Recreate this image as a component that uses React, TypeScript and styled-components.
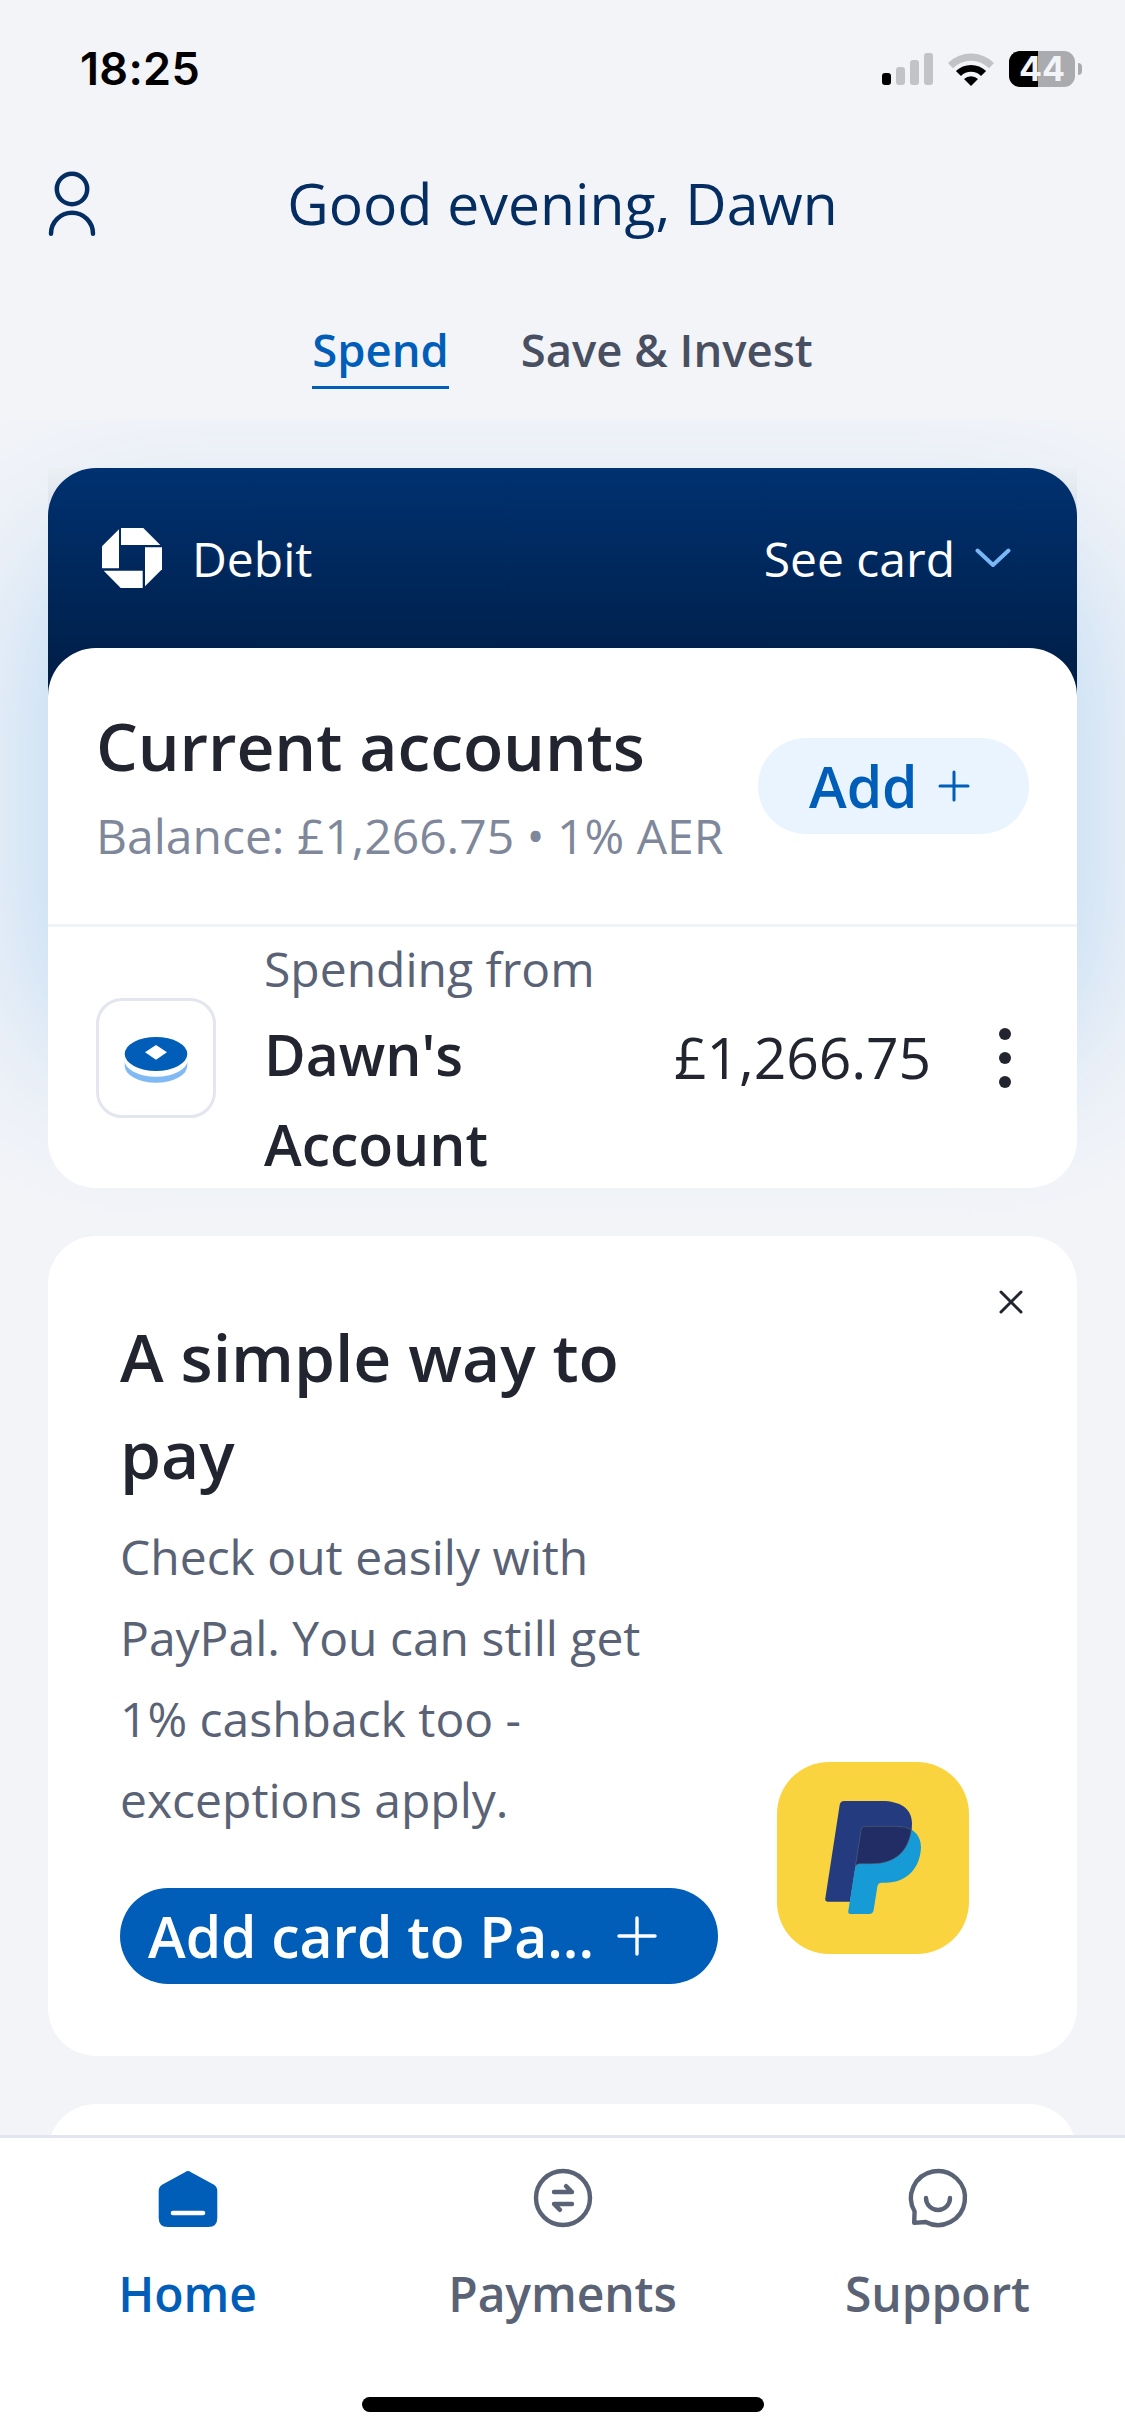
import React from "react";
import styled, { createGlobalStyle } from "styled-components";

const color = {
  page: "#f3f4f8",
  ink: "#22252f",
  slate: "#5a6275",
  mist: "#7f879a",
  blue: "#005eb8",
  navy: "#042d62",
  line: "#e3e6ee",
};

const GlobalStyle = createGlobalStyle`
  *, *::before { box-sizing: border-box; }
  body { margin: 0; background: ${color.page}; }
`;

const Screen = styled.div`
  width: 1125px;
  height: 2436px;
  display: flex;
  flex-direction: column;
  overflow: hidden;
  background: ${color.page};
  font-family: "Open Sans", "Noto Sans", sans-serif;
  color: ${color.ink};
`;

const Top = styled.header`
  height: 420px;
  flex: none;
  position: relative;
  z-index: 1;
  background: ${color.page};
`;

const StatusBar = styled.div`
  height: 138px;
  display: flex;
  align-items: center;
  justify-content: space-between;
  padding: 0 43px 0 80px;
`;

const Time = styled.span`
  font-family: Inter, "Open Sans", sans-serif;
  font-size: 45px;
  font-weight: 600;
  line-height: 54px;
  letter-spacing: 0.3px;
  color: #000;
`;

const StatusIcons = styled.div`
  display: flex;
  align-items: center;
  gap: 15px;
`;

const Signal = styled.div`
  display: flex;
  align-items: flex-end;
  gap: 5px;
  height: 32px;
`;

const Bar = styled.i<{ $h: number; $on?: boolean }>`
  width: 9px;
  height: ${(p) => p.$h}px;
  border-radius: 3px;
  background: ${(p) => (p.$on ? "#000" : "#c2c3c6")};
`;

const Battery = styled.div`
  display: flex;
  align-items: center;
  gap: 3px;
`;

const BatteryBody = styled.div`
  width: 66px;
  height: 36px;
  border-radius: 11px;
  background: linear-gradient(90deg, #000 29px, #aaabae 29px);
  color: ${color.page};
  font-family: Inter, "Open Sans", sans-serif;
  font-size: 34px;
  font-weight: 700;
  line-height: 36px;
  text-align: center;
`;

const BatteryCap = styled.i`
  width: 4px;
  height: 12px;
  border-radius: 0 4px 4px 0;
  background: #aaabae;
`;

const GreetingRow = styled.div`
  height: 130px;
  display: grid;
  grid-template-columns: 48px 1fr 48px;
  align-items: center;
  padding: 0 48px;
`;

const Greeting = styled.h1`
  margin: 0;
  text-align: center;
  font-size: 57px;
  font-weight: 400;
  line-height: 78px;
  letter-spacing: 0.08px;
  color: ${color.navy};
`;

const Tabs = styled.nav`
  display: flex;
  justify-content: center;
  gap: 72px;
  padding-top: 51px;
`;

const Tab = styled.a<{ $active?: boolean }>`
  font-size: 45.4px;
  font-weight: 600;
  line-height: 61px;
  padding-bottom: 6px;
  color: ${(p) => (p.$active ? color.blue : "#484f60")};
  border-bottom: 3px solid ${(p) => (p.$active ? color.blue : "transparent")};
`;

const Feed = styled.main`
  flex: 1;
  min-height: 0;
  display: flex;
  flex-direction: column;
  gap: 48px;
  padding: 48px 48px 0;
`;

const Hero = styled.section`
  flex: none;
  position: relative;
  background: linear-gradient(rgba(60, 60, 60, 0.01), rgba(60, 60, 60, 0.08) 40px, transparent 90px);

  &::before {
    content: "";
    position: absolute;
    inset: 84px 0 140px;
    box-shadow: 0 0 160px #b1d4f2;
  }
`;

const DebitHeader = styled.div`
  position: relative;
  height: 228px;
  margin-bottom: -48px;
  padding: 0 66px 48px 54px;
  border-radius: 48px 48px 0 0;
  background: linear-gradient(#003170, #001d44);
  color: #fff;
  display: flex;
  align-items: center;
  justify-content: space-between;
  font-size: 48px;
  line-height: 66px;
`;

const Inline = styled.div<{ $gap: number }>`
  display: flex;
  align-items: center;
  gap: ${(p) => p.$gap}px;
`;

const Label = styled.span`
  padding-top: 2px;
`;

const Accounts = styled.div`
  position: relative;
  background: #fff;
  border-radius: 48px;
`;

const AccountsHead = styled.div`
  height: 279px;
  padding: 48px;
  border-bottom: 3px solid #f2f3f8;
  display: flex;
  align-items: center;
  justify-content: space-between;
`;

const Title = styled.h2`
  margin: 0;
  font-size: 66px;
  font-weight: 600;
  line-height: 97px;
  letter-spacing: -0.08px;
  white-space: nowrap;
`;

const Caption = styled.p<{ $muted?: boolean }>`
  margin: 0;
  font-size: 48px;
  line-height: 81px;
  white-space: nowrap;
  padding-top: ${(p) => (p.$muted ? 1 : 0)}px;
  color: ${(p) => (p.$muted ? color.mist : color.slate)};
`;

const Button = styled.button<{ $primary?: boolean }>`
  height: 96px;
  width: ${(p) => (p.$primary ? 598 : 271)}px;
  padding: 0 ${(p) => (p.$primary ? "61px 0 28px" : "59px 0 51px")};
  border: 0;
  border-radius: 48px;
  display: flex;
  align-items: center;
  justify-content: space-between;
  font: 600 57px/78px "Open Sans", "Noto Sans", sans-serif;
  letter-spacing: -0.05px;
  white-space: nowrap;
  background: ${(p) => (p.$primary ? color.blue : "#e9f4ff")};
  color: ${(p) => (p.$primary ? "#fff" : color.blue)};
`;

const AccountRow = styled.div`
  height: 261px;
  padding: 0 66px 0 48px;
  display: flex;
  align-items: center;
`;

const AccountIcon = styled.div`
  width: 120px;
  height: 120px;
  flex: none;
  border: 3px solid ${color.line};
  border-radius: 26px;
  padding-top: 5px;
  display: flex;
  align-items: center;
  justify-content: center;
`;

const AccountText = styled.div`
  width: 340px;
  margin-left: 48px;
  padding-top: 2px;
`;

const AccountName = styled.div`
  font-size: 57px;
  font-weight: 600;
  line-height: 90px;
`;

const Amount = styled.div`
  margin-left: auto;
  font-size: 57px;
  line-height: 78px;
  letter-spacing: -0.1px;
  padding-bottom: 2px;
`;

const Kebab = styled.div`
  display: flex;
  flex-direction: column;
  gap: 12px;
  margin-left: 68px;
`;

const Dot = styled.i`
  width: 12px;
  height: 12px;
  border-radius: 50%;
  background: ${color.ink};
`;

const Card = styled.section`
  flex: none;
  position: relative;
  min-height: 200px;
  background: #fff;
  border-radius: 48px;
`;

const Promo = styled(Card)`
  display: grid;
  grid-template-columns: 598px 1fr;
  column-gap: 22px;
  padding: 72px;
`;

const PromoBody = styled.div`
  padding: 14px 0 48px;
`;

const PromoArt = styled.div`
  display: flex;
  align-items: flex-end;
  justify-content: center;
  padding-bottom: 30px;
`;

const PayPalTile = styled.div`
  width: 192px;
  height: 192px;
  border-radius: 52px;
  overflow: hidden;
  background: #fad43e;
`;

const Close = styled.span`
  position: absolute;
  top: 54px;
  right: 54px;
  display: flex;
`;

const BottomNav = styled.nav`
  flex: none;
  height: 301px;
  position: relative;
  background: #fff;
  border-top: 3px solid ${color.line};
  display: flex;
  flex-direction: column;
  align-items: center;
  justify-content: space-between;
  padding: 24px 0;
`;

const NavItems = styled.div`
  width: 100%;
  display: grid;
  grid-template-columns: repeat(3, 1fr);
`;

const NavItem = styled.a<{ $active?: boolean }>`
  display: flex;
  flex-direction: column;
  align-items: center;
  gap: 24px;
  font-size: 48px;
  font-weight: 600;
  line-height: 72px;
  letter-spacing: -0.1px;
  color: ${(p) => (p.$active ? color.blue : color.slate)};
`;

const HomeIndicator = styled.div`
  width: 402px;
  height: 15px;
  border-radius: 8px;
  background: #000;
`;

const Svg = styled.svg`
  display: block;
  flex: none;
  fill: none;
  stroke-linecap: round;
  stroke-linejoin: round;
`;

const Wifi = () => (
  <Svg width="46" height="33" viewBox="0 0 46 33">
    <path d="M0 10A32.8 32.8 0 0 1 46 10L41 15.2A25.6 25.6 0 0 0 5 15.2Z" fill="#c2c3c6" />
    <path d="M7.9 18A21.8 21.8 0 0 1 38.1 18L33 22.9A14.4 14.4 0 0 0 13 22.9Z" fill="#000" />
    <path d="M16 26A10.5 10.5 0 0 1 30 26L23 33Z" fill="#000" />
  </Svg>
);

const Person = () => (
  <Svg width="48" height="66" viewBox="0 0 48 66" stroke={color.navy} strokeWidth="4.5">
    <circle cx="24" cy="19" r="15.2" />
    <path d="M3 63.7A21 21 0 0 1 45 63.7" />
  </Svg>
);

const BankMark = () => (
  <Svg width="60" height="60" viewBox="0 0 60 60">
    <g fill="#fff">
      <path d="M19 0H41.3L58.3 17H19Z" />
      <path d="M17 1.3V40.3H0V18.3Z" />
      <path d="M43 19.3H60V41.3L43 58.3Z" />
      <path d="M1.7 42.7H40.7V60H18.7Z" />
    </g>
  </Svg>
);

const Chevron = () => (
  <Svg width="36" height="20" viewBox="0 0 36 20" stroke="#7ab8f5" strokeWidth="4">
    <path d="M2.5 2.5L18 17L33.5 2.5" />
  </Svg>
);

const Plus = ({ size, weight }: { size: number; weight: number }) => (
  <Svg width={size} height={size} viewBox={`0 0 ${size} ${size}`} stroke="currentColor" strokeWidth={weight}>
    <path d={`M${size / 2} 2V${size - 2}M2 ${size / 2}H${size - 2}`} />
  </Svg>
);

const Coin = () => (
  <Svg width="64" height="48" viewBox="0 0 64 48">
    <path d="M.7 22V29.7A31.3 17 0 0 0 63.3 29.7V22Z" fill="#80baf5" />
    <path d="M.3 18V23.7A31.7 17 0 0 0 63.7 23.7V18Z" fill="#fff" />
    <ellipse cx="32" cy="18" rx="31.3" ry="17" fill={color.blue} />
    <path d="M32 8.9L43 16.3L32 23.8L21 16.3Z" fill="#fff" />
  </Svg>
);

const PayPal = () => (
  <Svg width="192" height="192" viewBox="51 66 576 576">
    <path
      d="M239 195Q241 183 253 183H365C420 183 456 205 456 250C456 330 410 371 335 371H300Q288 371 286 384L270 485H203Q194 485 196 475Z"
      fill="#253b80"
    />
    <path
      d="M303 270Q305 259 315 259H410C458 259 483 285 483 322C480 395 430 428 380 428H366Q354 428 352 440L341 510Q339 522 327 522H273Q263 522 265 512Z"
      fill="#179bd7"
    />
    <path
      d="M303 270Q305 259 315 259H410Q435 259 454 269C445 335 405 371 335 371H300Q288 371 286 380Z"
      fill="#222d65"
      stroke="#5c5c62"
      strokeWidth="1.5"
    />
  </Svg>
);

const Cross = () => (
  <Svg width="24" height="24" viewBox="0 0 24 24" stroke={color.ink} strokeWidth="3">
    <path d="M2 2L22 22M22 2L2 22" />
  </Svg>
);

const HomeIcon = () => (
  <Svg width="72" height="72" viewBox="0 0 72 72">
    <path
      d="M33 10.2Q36 8 39 10.2L62 22.8Q65.3 25 65.3 29V56Q65.3 65 56.3 65H15.7Q6.7 65 6.7 56V29Q6.7 25 10 22.8Z"
      fill={color.blue}
    />
    <path d="M21 51H51" stroke="#fff" strokeWidth="4.6" />
  </Svg>
);

const TransferIcon = () => (
  <Svg width="72" height="72" viewBox="0 0 72 72" stroke={color.slate} strokeWidth="4.4">
    <circle cx="36" cy="36" r="27" />
    <path d="M27 30H45L39 24.2M45 42H27L33 47.8" />
  </Svg>
);

const ChatIcon = () => (
  <Svg width="72" height="72" viewBox="0 0 72 72" stroke={color.slate} strokeWidth="4.4">
    <path d="M12.6 49.5A27 27 0 1 1 23.6 60L12.2 60.9Z" />
    <path d="M24 36A12 12 0 0 0 48 36" />
  </Svg>
);

const navItems = [
  { label: "Home", icon: <HomeIcon />, active: true },
  { label: "Payments", icon: <TransferIcon /> },
  { label: "Support", icon: <ChatIcon /> },
];

export default function App() {
  return (
    <Screen>
      <GlobalStyle />
      <Top>
        <StatusBar>
          <Time>18:25</Time>
          <StatusIcons>
            <Signal>
              <Bar $h={12} $on />
              <Bar $h={18} />
              <Bar $h={25} />
              <Bar $h={32} />
            </Signal>
            <Wifi />
            <Battery>
              <BatteryBody>44</BatteryBody>
              <BatteryCap />
            </Battery>
          </StatusIcons>
        </StatusBar>
        <GreetingRow>
          <Person />
          <Greeting>Good evening, Dawn</Greeting>
        </GreetingRow>
        <Tabs>
          <Tab $active>Spend</Tab>
          <Tab>Save &amp; Invest</Tab>
        </Tabs>
      </Top>

      <Feed>
        <Hero>
          <DebitHeader>
            <Inline $gap={30}>
              <BankMark />
              <Label>Debit</Label>
            </Inline>
            <Inline $gap={20}>
              <Label>See card</Label>
              <Chevron />
            </Inline>
          </DebitHeader>
          <Accounts>
            <AccountsHead>
              <div>
                <Title>Current accounts</Title>
                <Caption $muted>Balance: £1,266.75 • 1% AER</Caption>
              </div>
              <Button>
                Add
                <Plus size={32} weight={3} />
              </Button>
            </AccountsHead>
            <AccountRow>
              <AccountIcon>
                <Coin />
              </AccountIcon>
              <AccountText>
                <Caption>Spending from</Caption>
                <AccountName>
                  Dawn's
                  <br />
                  Account
                </AccountName>
              </AccountText>
              <Amount>£1,266.75</Amount>
              <Kebab>
                <Dot />
                <Dot />
                <Dot />
              </Kebab>
            </AccountRow>
          </Accounts>
        </Hero>

        <Promo>
          <div>
            <Title>
              A simple way to
              <br />
              pay
            </Title>
            <PromoBody>
              <Caption>
                Check out easily with
                <br />
                PayPal. You can still get
                <br />
                1% cashback too -
                <br />
                exceptions apply.
              </Caption>
            </PromoBody>
            <Button $primary>
              Add card to Pa...
              <Plus size={40} weight={3.4} />
            </Button>
          </div>
          <PromoArt>
            <PayPalTile>
              <PayPal />
            </PayPalTile>
          </PromoArt>
          <Close>
            <Cross />
          </Close>
        </Promo>

        <Card />
      </Feed>

      <BottomNav>
        <NavItems>
          {navItems.map((item) => (
            <NavItem key={item.label} $active={item.active}>
              {item.icon}
              {item.label}
            </NavItem>
          ))}
        </NavItems>
        <HomeIndicator />
      </BottomNav>
    </Screen>
  );
}
